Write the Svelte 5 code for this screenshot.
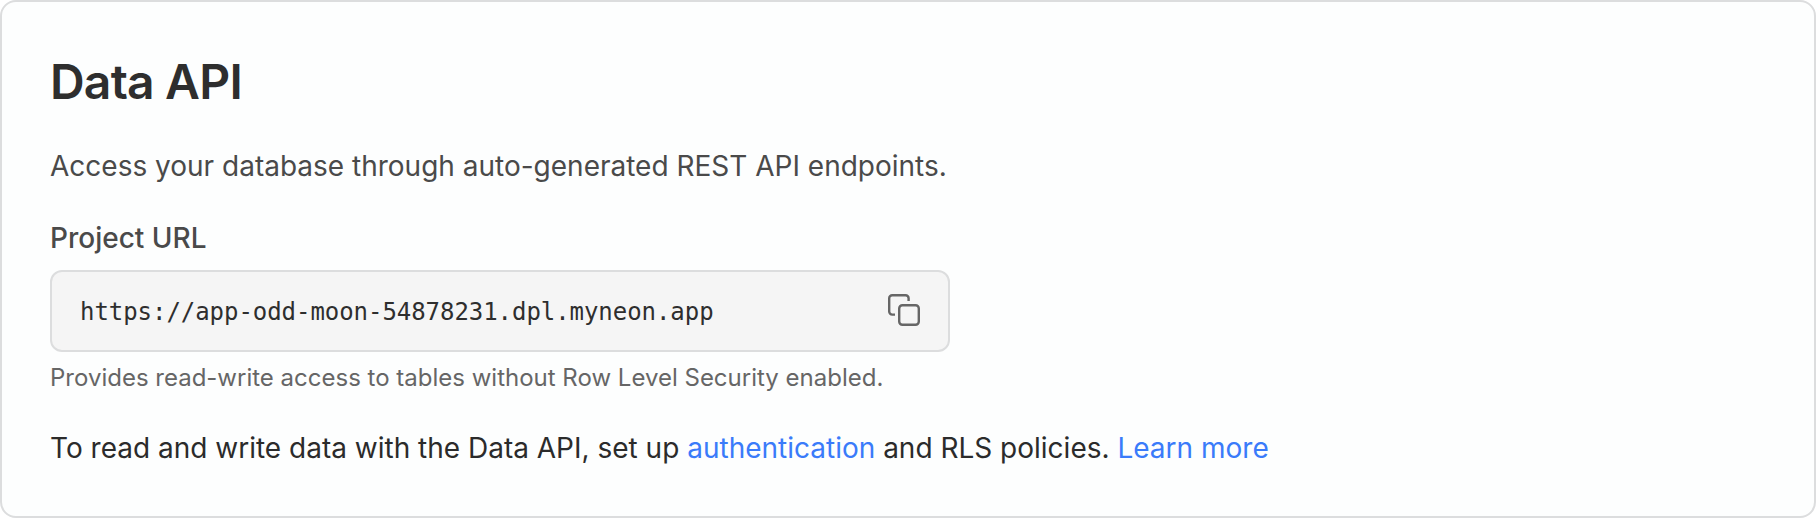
<script>
  const projectUrl = 'https://app-odd-moon-54878231.dpl.myneon.app';
</script>

<section class="card">
  <h1>Data API</h1>
  <p class="intro">Access your database through auto-generated REST API endpoints.</p>
  <div class="label">Project URL</div>
  <div class="field">
    <code>{projectUrl}</code>
    <button aria-label="Copy">
      <svg viewBox="0 0 32 32" width="32" height="32" fill="none" stroke="currentColor" stroke-width="2.4" stroke-linejoin="round">
        <rect x="11.2" y="11.2" width="19.6" height="19.6" rx="3.2" />
        <path d="M7 20.6H4.2a3 3 0 0 1-3-3V4.2a3 3 0 0 1 3-3h13.4a3 3 0 0 1 3 3v2.8" />
      </svg>
    </button>
  </div>
  <p class="hint">Provides read-write access to tables without Row Level Security enabled.</p>
  <p class="note">To read and write data with the Data API, set up <a href="#auth">authentication</a> and RLS policies. <a href="#more">Learn more</a></p>
</section>

<style>
  :global(body) { background: #fff; }
  .card {
    box-sizing: border-box; width: 1816px; height: 518px; padding: 48px 48px;
    border: 2px solid #dcddde; border-radius: 16px; background: #fdfefe;
    font-family: Inter, sans-serif; color: #2b2b2b;
  }
  h1 { margin: 0; font-size: 48px; line-height: 64px; font-weight: 600; letter-spacing: -0.0165em; color: #2e2e2e; white-space: nowrap; }
  p { margin: 0; white-space: nowrap; }
  .intro { margin-top: 32px; font-size: 28px; line-height: 40px; color: #4a4a4a; }
  .label { margin-top: 32px; font-size: 28px; line-height: 40px; font-weight: 500; color: #4a4a4a; }
  .field {
    box-sizing: border-box; width: 900px; height: 82px; margin-top: 12px; padding: 0 28px;
    display: flex; align-items: center; justify-content: space-between;
    border: 2px solid #dcddde; border-radius: 12px; background: #f5f5f5;
  }
  code { padding-top: 1px; font: 24px "DejaVu Sans Mono", monospace; letter-spacing: -0.05px; color: #2e2e2e; }
  button { display: flex; padding: 0 0 2px; border: 0; background: none; color: #666; }
  .hint { margin-top: 8px; font-size: 24px; line-height: 36px; color: #666; }
  .note { margin-top: 32px; font-size: 28px; line-height: 40px; }
  a { color: #3a7bfa; text-decoration: none; }
</style>
